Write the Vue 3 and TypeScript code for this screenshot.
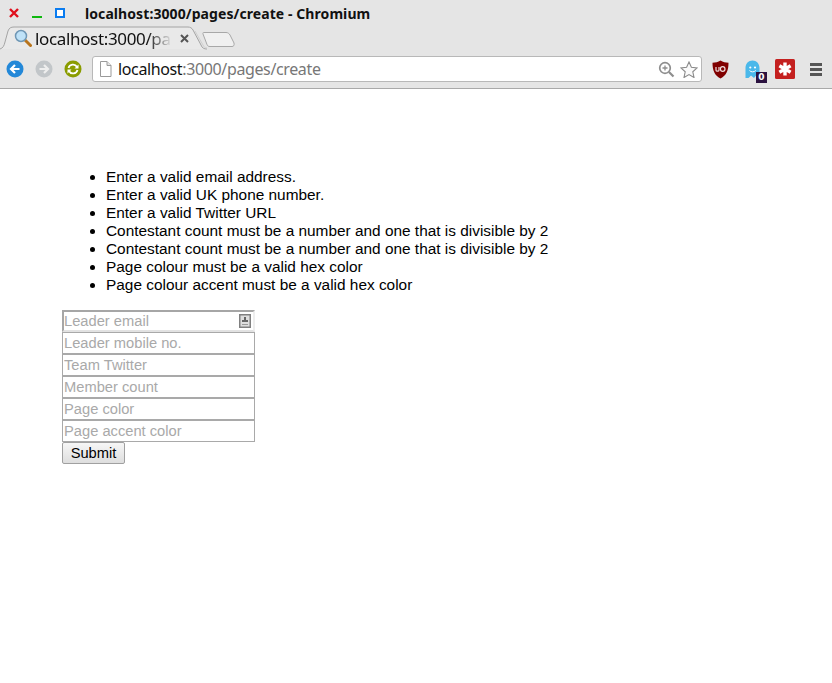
<template>
  <div class="window">
    <header class="chrome">
      <div class="titlebar">
        <div class="wm">
          <svg width="12" height="12" viewBox="0 0 12 12"><path d="M2 2l8 8M10 2l-8 8" stroke="#e0101c" stroke-width="2.4" fill="none" /></svg>
          <svg width="12" height="12" viewBox="0 0 12 12"><path d="M1 10h10" stroke="#0fb80f" stroke-width="2" fill="none" /></svg>
          <svg width="12" height="12" viewBox="0 0 12 12"><rect x="2" y="2" width="8" height="8" stroke="#0a7cf0" stroke-width="2" fill="#fff" /></svg>
        </div>
        <span class="wintitle">localhost:3000/pages/create - Chromium</span>
      </div>
      <div class="tabstrip">
        <div class="tab">
          <svg class="tabshape" width="207" height="24" viewBox="0 0 207 24">
            <path d="M0 23C3 22 4 20 5 16L8 5C9 2 11 1 14 1H188C190 1 192 2 193 4L201 19C202 22 204 23 207 23" fill="#e9e9e9" stroke="#a4a4a4" />
            <path d="M195 5L203 19C204 21 205 22 207 22" fill="none" stroke="#cfcfcf" />
          </svg>
          <svg class="favicon" width="18" height="18" viewBox="0 0 18 18">
            <path d="M11 11l5.500 5.500" stroke="#b8741c" stroke-width="3" stroke-linecap="round" />
            <circle cx="7" cy="7" r="5.500" fill="#bfe2f8" stroke="#6f97b5" stroke-width="1.500" />
          </svg>
          <span class="tabtext">localhost:3000/pa</span>
          <svg class="tabclose" width="9" height="9" viewBox="0 0 9 9"><path d="M1 1l7 7M8 1l-7 7" stroke="#555" stroke-width="2" /></svg>
        </div>
        <svg class="newtab" width="33" height="17" viewBox="0 0 33 17">
          <path d="M1.500 1.500H24C26 1.500 27 2.500 28 4L32 12C32.500 14.500 31.500 15.500 30 15.500H8C6.500 15.500 5.500 15 5 13.500L1 3C.8 2 1 1.500 1.500 1.500Z" fill="#f0f0f0" stroke="#a8a8a8" />
        </svg>
      </div>
      <div class="toolbar">
        <div class="navbtns">
          <svg width="18" height="18" viewBox="0 0 18 18">
            <circle cx="9" cy="9" r="8.500" fill="#2388d8" />
            <path d="M13.500 9H6M9 5L5 9l4 4" stroke="#fff" stroke-width="2.200" fill="none" />
          </svg>
          <svg width="18" height="18" viewBox="0 0 18 18">
            <circle cx="9" cy="9" r="8.500" fill="#c2c6c9" />
            <path d="M4.500 9H12M9 5l4 4-4 4" stroke="#eee" stroke-width="2.200" fill="none" />
          </svg>
          <svg width="18" height="18" viewBox="0 0 18 18">
            <circle cx="9" cy="9" r="8.500" fill="#8a9c00" />
            <path d="M4.500 8A4.600 4.600 0 0 1 13 7M13.500 10A4.600 4.600 0 0 1 5 11" stroke="#fff" stroke-width="1.800" fill="none" />
            <path d="M14.500 4.500V8.500H10.500ZM3.500 13.500V9.500H7.500Z" fill="#fff" />
          </svg>
        </div>
        <div class="omnibox">
          <svg width="13" height="16" viewBox="0 0 13 16">
            <path d="M1.500 .5H8L12 4.500V15.500H1.500Z" fill="#fff" stroke="#9a9a9a" />
            <path d="M8 .5V4.500H12" fill="#e4e4e4" stroke="#9a9a9a" />
          </svg>
          <span class="url"><b>localhost</b>:3000/pages/create</span>
          <svg class="zoomicon" width="17" height="17" viewBox="0 0 17 17">
            <circle cx="7" cy="7" r="5.300" fill="none" stroke="#8e8e8e" stroke-width="1.700" />
            <path d="M7 4.500v5M4.500 7h5" stroke="#8e8e8e" stroke-width="1.300" />
            <path d="M11 11l4.500 4.500" stroke="#8e8e8e" stroke-width="2.200" />
          </svg>
          <svg width="18" height="17" viewBox="0 0 18 17">
            <path d="M9 1l2.400 5.300 5.700.6-4.300 3.900 1.200 5.700L9 13.600l-5 2.900 1.200-5.700L.9 6.900l5.700-.6Z" fill="#fafafa" stroke="#8a8a8a" stroke-width="1.100" />
          </svg>
        </div>
        <div class="exts">
          <svg class="ext-ublock" width="17" height="19" viewBox="0 0 17 19">
            <path d="M8.500 .5C11 2 13.500 2.700 16.500 2.700 16.500 10 14.500 15.500 8.500 18.500 2.500 15.500 .5 10 .5 2.700 3.500 2.700 6 2 8.500 .5Z" fill="#800000" />
            <path d="M4 7v3.200C4 11.500 7 11.500 7 10.200V7" stroke="#eedcdc" stroke-width="1.200" fill="none" />
            <circle cx="10.700" cy="9" r="2.300" stroke="#eedcdc" stroke-width="1.200" fill="none" />
          </svg>
          <div class="ext-ghost">
            <svg width="17" height="19" viewBox="0 0 17 19">
              <path d="M1.500 18V8C1.500 3.500 4.500 .5 8.500 .5S15.500 3.500 15.500 8V17L12.500 15 10 18 7 15.500 4.500 18Z" fill="#4ab8ea" />
              <circle cx="6.300" cy="7.500" r="1.100" fill="#fff" />
              <circle cx="11" cy="7.500" r="1.100" fill="#fff" />
              <path d="M5.500 10.500C7 12.300 10 12.300 11.800 10.500" stroke="#fff" fill="none" />
            </svg>
            <span class="badge">0</span>
          </div>
          <svg class="ext-lastpass" width="20" height="20" viewBox="0 0 20 20">
            <rect width="20" height="20" rx="1.500" fill="#c4201f" />
            <path d="M10 3.500v13M4.400 6.750l11.200 6.500M15.600 6.750l-11.200 6.500" stroke="#fff" stroke-width="3.400" />
          </svg>
          <div class="menu"><i></i><i></i><i></i></div>
        </div>
      </div>
    </header>

    <main class="page">
      <ul class="errors">
        <li v-for="(msg, i) in errors" :key="i">{{ msg }}</li>
      </ul>
      <form class="form" @submit.prevent>
        <div class="field first">
          <input type="text" :placeholder="fields[0]" />
          <svg class="contact" width="12" height="14" viewBox="0 0 12 14">
            <rect x=".75" y=".75" width="10.500" height="12.500" fill="#dedede" stroke="#808080" stroke-width="1.500" />
            <rect x="5" y="3" width="2" height="3" fill="#666" />
            <rect x="3" y="6" width="6" height="2" fill="#666" />
            <rect x="3" y="10" width="6" height="1" fill="#999" />
          </svg>
        </div>
        <input v-for="name in fields.slice(1)" :key="name" type="text" :placeholder="name" />
        <button class="submit" type="submit">Submit</button>
      </form>
    </main>
  </div>
</template>

<script setup lang="ts">
const errors: string[] = [
  'Enter a valid email address.',
  'Enter a valid UK phone number.',
  'Enter a valid Twitter URL',
  'Contestant count must be a number and one that is divisible by 2',
  'Contestant count must be a number and one that is divisible by 2',
  'Page colour must be a valid hex color',
  'Page colour accent must be a valid hex color'
]

const fields: string[] = [
  'Leader email',
  'Leader mobile no.',
  'Team Twitter',
  'Member count',
  'Page color',
  'Page accent color'
]
</script>

<style>
html, body { margin: 0; background: #fff; }
</style>

<style scoped>
.window { width: 832px; height: 683px; overflow: hidden; font-family: "Liberation Sans", Arial, sans-serif; }

.chrome { height: 88px; background: #e5e5e5; border-bottom: 1px solid #a9a9a9; display: flex; flex-direction: column; font-family: "Noto Sans", sans-serif; }
.titlebar { height: 26px; display: flex; align-items: center; flex-shrink: 0; }
.wm { display: flex; gap: 11px; padding-left: 8px; width: 77px; flex-shrink: 0; }
.wintitle { font-size: 14px; letter-spacing: .08px; font-weight: 700; color: #111; }

.tabstrip { height: 24px; display: flex; align-items: flex-start; flex-shrink: 0; }
.tab { position: relative; width: 207px; height: 24px; display: flex; align-items: center; }
.tabshape { position: absolute; left: 0; top: 0; }
.favicon { position: relative; margin-left: 14px; flex-shrink: 0; }
.tabtext { position: relative; font-size: 17px; letter-spacing: -.35px; color: #111; margin-left: 3px; width: 137px; white-space: nowrap; -webkit-mask-image: linear-gradient(90deg, #000 82%, transparent 100%); mask-image: linear-gradient(90deg, #000 82%, transparent 100%); }
.tabclose { position: relative; margin-left: 8px; }
.newtab { margin: 5px 0 0 -5px; }

.toolbar { flex: 1; display: flex; align-items: center; padding: 0 7px 0 6px; }
.navbtns { display: flex; gap: 11px; width: 86px; flex-shrink: 0; }
.omnibox { width: 610px; height: 26px; box-sizing: border-box; background: #fff; border: 1px solid #b8b8b8; border-radius: 3px; display: flex; align-items: center; padding: 0 3px 0 6px; }
.url { flex: 1; margin-left: 6px; font-size: 16px; letter-spacing: -.37px; color: #777; white-space: nowrap; }
.url b { font-weight: 400; color: #111; }
.zoomicon { margin-right: 5px; }

.exts { display: flex; align-items: center; flex: 1; margin-left: 10px; }
.ext-ublock { margin-right: 15px; }
.ext-ghost { position: relative; display: flex; margin-right: 14px; }
.badge { position: absolute; right: -6px; bottom: -4px; width: 11px; height: 11px; background: #2b1240; color: #fff; font: 700 9px/11px "DejaVu Sans", sans-serif; text-align: center; }
.ext-lastpass { margin-right: 15px; }
.menu { display: flex; flex-direction: column; gap: 2px; }
.menu i { width: 12px; height: 3px; background: #555; display: block; }

.page { padding: 79px 0 0 62px; }
.errors { margin: 0 0 16px; padding: 0 0 0 44px; font-size: 15.400px; line-height: 18px; color: #000; }

.form { display: flex; flex-direction: column; align-items: flex-start; width: 193px; }
.field { position: relative; display: flex; }
input { width: 193px; height: 22px; box-sizing: border-box; border: 1px solid #a9a9a9; margin: 0; padding: 0 1px; font: 14.700px "Liberation Sans", Arial, sans-serif; background: #fff; outline: none; }
input::placeholder { color: #a9a9a9; opacity: 1; }
.first input { border-width: 2px; border-color: #a6a6a6 #eee #e2e2e2 #a6a6a6; padding: 0 0 1px; }
.contact { position: absolute; right: 4px; top: 4px; }
.submit { width: 63px; height: 22px; margin: 0; padding: 0 0 1px; box-sizing: border-box; font: 14.700px "Liberation Sans", Arial, sans-serif; color: #000; background: linear-gradient(#f6f6f6, #dedede); border: 1px solid #a0a0a0; border-radius: 2px; }
</style>
